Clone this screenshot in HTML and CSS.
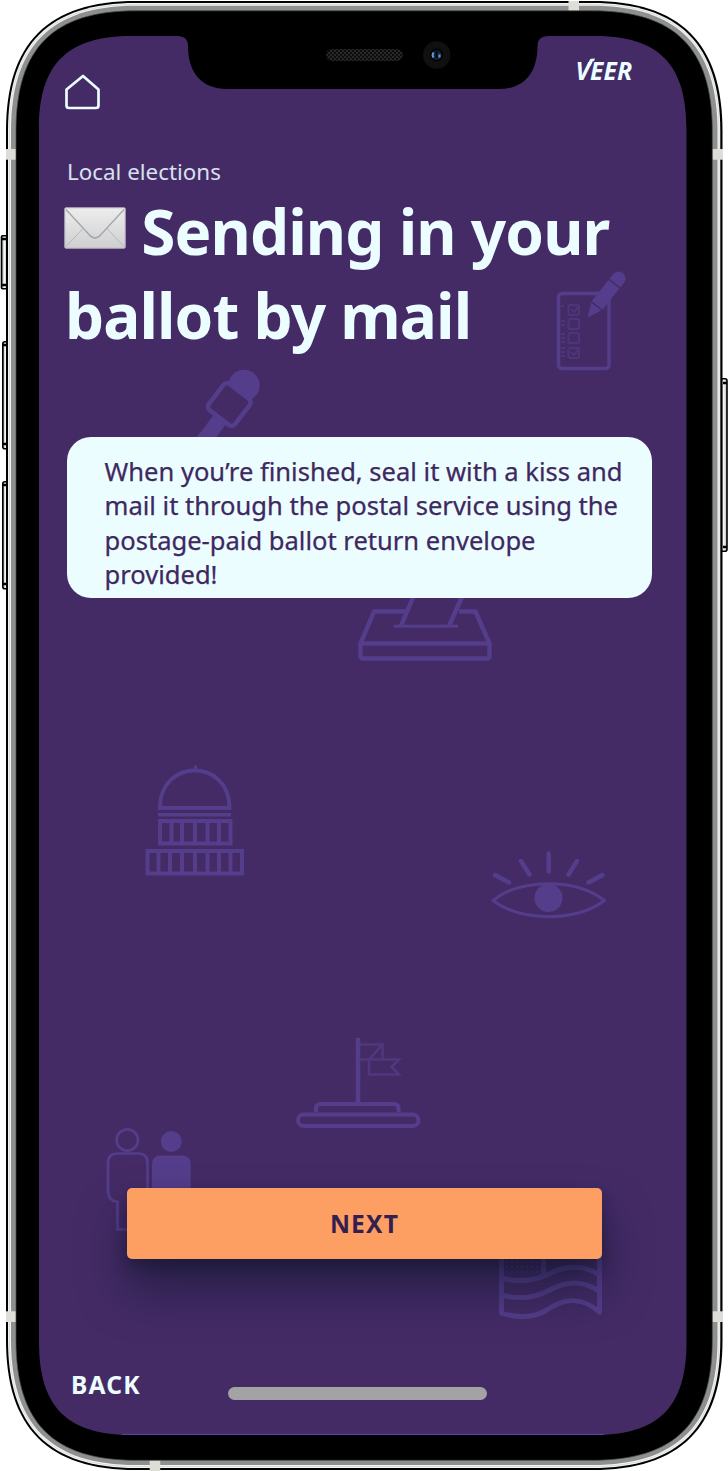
FILE: index.html
```html
<!DOCTYPE html>
<html lang="en">
<head>
<meta charset="utf-8">
<title>Veer – Sending in your ballot by mail</title>
<link rel="stylesheet" href="styles.css">
</head>
<body>
<div class="device">
  <svg class="shell" viewBox="0 0 728 1471" aria-hidden="true">
    <defs>
      <linearGradient id="key" x1="0" x2="1" y1="0" y2="0">
        <stop offset="0" stop-color="#777"/><stop offset=".45" stop-color="#fff"/><stop offset="1" stop-color="#aaa"/>
      </linearGradient>
      <pattern id="mesh" width="4" height="4" patternUnits="userSpaceOnUse">
        <rect width="4" height="4" fill="#0d0d0d"/>
        <path d="M0 0h2v2H0zM2 2h2v2H2z" fill="#272727"/>
      </pattern>
    </defs>
    <!-- side keys -->
    <g fill="url(#key)" stroke="#000" stroke-width="1.6">
      <rect x="1.5" y="235.800" width="6" height="53" rx="1"/>
      <rect x="2.800" y="341.800" width="5" height="107" rx="2"/>
      <rect x="2.800" y="481.800" width="5" height="107" rx="2"/>
      <rect x="721" y="378.800" width="6" height="172.500" rx="2"/>
    </g>
    <g stroke="#000" stroke-width="2.500">
      <path d="M2 239h4M2 285h4M3 345h4M3 444h4M3 485h4M3 584h4M723 383h4M723 547h4"/>
    </g>
    <!-- metal band -->
    <path d="M6 131C6 43 48 1 136 1H592C680 1 722.500 43 722.500 131V1340C722.500 1428 680 1470 592 1470H136C48 1470 6 1428 6 1340Z" fill="#000"/>
    <path d="M8 131C8 44 49 3 136 3H592C679 3 720.300 44 720.300 131V1340C720.300 1427 679 1468 592 1468H136C49 1468 8 1427 8 1340Z" fill="#f1f3ef"/>
    <path d="M9.500 131C9.500 45 50 4.500 136 4.500H592C678 4.500 719 45 719 131V1340C719 1426 678 1466.500 592 1466.500H136C50 1466.500 9.500 1426 9.500 1340Z" fill="none" stroke="#c5c8c4" stroke-width=".5"/>
    <path d="M11 131C11 46 51 5.800 136 5.800H592C677 5.800 717.500 46 717.500 131V1340C717.500 1425 677 1465 592 1465H136C51 1465 11 1425 11 1340Z" fill="#8e908f"/>
    <g fill="#dcded7">
      <rect x="568.500" y="1" width="10.500" height="10"/>
      <rect x="149.700" y="1460" width="10.500" height="11"/>
      <rect x="6" y="149" width="10.500" height="10.700"/>
      <rect x="6" y="1311.300" width="10.500" height="10.700"/>
      <rect x="712" y="149" width="11" height="10.700"/>
      <rect x="712" y="1311.300" width="11" height="10.700"/>
    </g>
    <path d="M16 131C16 48 53 10.800 136 10.800H592C675 10.800 712.300 48 712.300 131V1340C712.300 1423 675 1460.300 592 1460.300H136C53 1460.300 16 1423 16 1340Z" fill="#000" stroke="#484a49" stroke-width=".7"/>
    <!-- display with notch -->
    <path d="M39 129C39 64 67 36 132 36H178Q188 36 188 46C188 73 202 89 227 89H499C524 89 537.500 73 537.500 46Q537.500 36 548 36H594C659 36 686.500 64 686.500 129V1342C686.500 1407 659 1435 594 1435H132C67 1435 39 1407 39 1342Z" fill="#442b66"/>
    <path d="M122 1434.400H604" stroke="#5d44ad"/>
    <!-- speaker and camera -->
    <rect x="326" y="49" width="77" height="12" rx="6" fill="url(#mesh)"/>
    <circle cx="436.700" cy="55" r="13.700" fill="#101010"/>
    <circle cx="436.700" cy="55" r="6.500" fill="#020204"/>
    <circle cx="436.700" cy="55" r="4.800" fill="#18243a"/>
    <path d="M433.500 52.500q-1.800 2.500 0 5M439.500 54.500v3" stroke="#5c9be0" stroke-width="2" fill="none"/>
    <path d="M436.500 51v7" stroke="#05060a" stroke-width="2"/>
  </svg>

  <svg class="doodles" viewBox="0 0 728 1471" aria-hidden="true">
    <!-- ballot sheet and pencil -->
    <g fill="none" stroke="#543d8a" stroke-width="3.500" stroke-linejoin="round">
      <rect x="558.500" y="293.500" width="50.500" height="75" rx="3.500"/>
      <g stroke-width="2" stroke="#4c3579">
        <rect x="568.500" y="305" width="10.500" height="10" rx="1.500"/>
        <rect x="568.500" y="319" width="10.500" height="10" rx="1.500"/>
        <rect x="568.500" y="333" width="10.500" height="10" rx="1.500"/>
        <rect x="568.500" y="348" width="10.500" height="10" rx="1.500"/>
        <path d="M571 309l3 3 5-6M571 352l3 3 5-6"/>
        <path d="M561 306h3M561 321h4M561 325h4M561 334h4M561 338h4M561 342h4M561 348h4M561 352h4M561 356h4"/>
      </g>
    </g>
    <g transform="translate(587.500 317.500) rotate(38.500)" fill="#543d8a">
      <path d="M0 0L-6.500-14H6.500Z"/>
      <path d="M-7-15.500V-42.500H7V-15.500Z"/>
      <path d="M-7-44V-50Q-6.500-56 0-57Q6.500-56 7-50V-44Z"/>
    </g>
    <!-- microphone -->
    <g>
      <circle cx="244" cy="385.500" r="15.700" fill="#543d8a"/>
      <path d="M213 416l13 8-22 30-14-8Z" fill="#543d8a"/>
      <rect x="-16.500" y="-16.500" width="33" height="33" rx="4.500" transform="translate(229.300 404.500) rotate(37.500)" fill="#442b66" stroke="#543d8a" stroke-width="4.500"/>
    </g>
    <!-- ballot box -->
    <g fill="none" stroke="#543d8a" stroke-width="4.500" stroke-linejoin="round">
      <path d="M405 611.500H374L360.500 643.500V655.500Q360.500 658.500 363.500 658.500H486.500Q489.500 658.500 489.500 655.500V643.500L475.500 611.500H459M361 643.500H489"/>
      <path d="M416 590L401 626M465 590L449 626" />
      <path d="M394 626.300H458" stroke-width="3"/>
    </g>
    <!-- capitol -->
    <g fill="none" stroke="#543d8a" stroke-width="4">
      <path d="M159.800 808C160 758 229.500 758 229.500 808Z"/>
      <path d="M195.500 765.500v6" stroke-width="3"/>
      <path d="M158 814.800H231" stroke-width="3.500"/>
      <path d="M160 821H230.500V843.500H160ZM171.500 821V843M182 821V843M195 821V843M207.500 821V843M219 821V843"/>
      <path d="M147.500 851H242V873.500H147.500ZM158.500 851V873M170 851V873M182 851V873M195 851V873M207.500 851V873M219 851V873M230.500 851V873"/>
    </g>
    <!-- eye -->
    <g fill="none" stroke="#543d8a" stroke-width="3" stroke-linejoin="round" stroke-linecap="round">
      <path d="M493 900.500C521 878 576 878 604.500 900.500C576 922 521 922 493 900.500Z"/>
      <circle cx="548.500" cy="898" r="14" fill="#543d8a" stroke="none"/>
      <path stroke-width="4.500" d="M548.700 853.500V871.500M521 861L529.500 874.500M577 861L568.500 874.500M495 875L509 882.500M602.500 875L588.500 882.500"/>
    </g>
    <!-- flag on podium -->
    <g fill="none" stroke="#543d8a" stroke-width="4">
      <path d="M358 1038V1102" stroke-width="4.500"/>
      <path d="M316 1112V1108.500Q316 1104 320.500 1104H394Q398.500 1104 398.500 1108.500V1112"/>
      <rect x="298" y="1114.500" width="120.500" height="11.500" rx="5.750"/>
      <path stroke-width="2.500" stroke="#4f387e" d="M359 1044.500H382.500V1059.500M359 1059.500H399L391.500 1067L399 1074.500H369V1059.500L382 1045"/>
    </g>
    <!-- people -->
    <g fill="none" stroke="#543d8a" stroke-width="2.700">
      <circle cx="127.300" cy="1140" r="10.700"/>
      <path d="M117.500 1230V1202C111 1201 108 1197 108 1191V1163Q108 1153.500 117.500 1153.500H138Q147.500 1153.500 147.500 1163V1202M116 1229.500H132"/>
      <circle cx="171.300" cy="1141.500" r="10.500" fill="#543d8a" stroke="none"/>
      <path d="M152 1200V1164Q152 1155.500 161 1155.500H182Q190.700 1155.500 190.700 1164V1200Z" fill="#543d8a" stroke="none"/>
    </g>
    <!-- waving flag -->
    <g fill="none" stroke="#543d8a" stroke-width="5" stroke-linejoin="round">
      <path d="M501.500 1250V1313C516 1318 533 1318 545 1311C566 1297 582 1297 599.500 1312V1250M501.500 1295C520 1300 535 1298 550 1290C568 1280 583 1281 599.500 1291M501.500 1278C520 1283 537 1280 551 1273C568 1265 584 1265 599.500 1275M543.500 1250V1275"/>
      <path d="M506 1262h34M506 1267h34M506 1272h34" stroke-width="2" stroke-dasharray="2 3" opacity=".6"/>
    </g>
  </svg>

  <main class="screen">
    <header class="topbar">
      <svg class="home" viewBox="0 0 38 38" role="img" aria-label="Home"><path d="M18 3L33.500 16.500V32.500Q33.500 35 31 35H4Q1.500 35 1.500 32.500V16.500Z" fill="none" stroke="#ebfdff" stroke-width="2.700" stroke-linejoin="round"/></svg>
      <div class="brand">VEER<svg class="flick" viewBox="0 0 8 8" aria-hidden="true"><path d="M0 8L2.800 1.800Q3.300 .9 4.500 .8L8 .4L7 3.300H5.700L3.600 8Z" fill="#ebfdff"/></svg></div>
    </header>
    <p class="eyebrow">Local elections</p>
    <h1 class="title"><svg class="envelope" viewBox="0 0 62 42" aria-hidden="true">
      <defs><linearGradient id="paper" x1="0" x2="0" y1="0" y2="1"><stop offset="0" stop-color="#ededed"/><stop offset="1" stop-color="#cfcfcf"/></linearGradient></defs>
      <rect x=".8" y=".8" width="60.400" height="40.400" rx="1" fill="url(#paper)" stroke="#b9b2bf"/>
      <path d="M2 39.500L19 21.500M60 39.500L43 21.500" stroke="#b5b8ba" stroke-width="1" fill="none"/>
      <path d="M2 2.500L25 27.500Q31 34.500 37 27.500L60 2.500" stroke="#a0a7ad" stroke-width="1.300" fill="none"/>
    </svg><span class="line">Sending in your</span><br><span class="line">ballot by mail</span></h1>
    <section class="card">When you’re finished, seal it with a kiss and<br>mail it through the postal service using the<br>postage-paid ballot return envelope<br>provided!</section>
    <button class="next" type="button">NEXT</button>
    <footer class="bottom">
      <a class="back">BACK</a>
      <span class="indicator"></span>
    </footer>
  </main>
</div>
</body>
</html>
```

FILE: styles.css
```css
* { box-sizing: border-box; }
body { margin: 0; background: #fff; font-family: "Noto Sans", sans-serif; }
.device { position: relative; width: 728px; height: 1471px; overflow: hidden; }
.shell, .doodles { position: absolute; left: 0; top: 0; width: 728px; height: 1471px; }
.screen {
  position: relative;
  display: flex;
  flex-direction: column;
  height: 1471px;
  padding: 54px 76px 0 67px;
  color: #ebfdff;
}
.topbar { display: flex; justify-content: space-between; align-items: flex-start; height: 103px; }
.home { width: 38px; height: 38px; margin: 19px 0 0 -2px; }
.brand { position: relative; margin-right: 19.5px; font-size: 24.5px; line-height: 33px; font-weight: 700; font-style: italic; letter-spacing: .2px; }
.flick { position: absolute; left: 11.500px; top: 4px; width: 8px; height: 8px; }
.eyebrow { margin: 0; height: 30px; font-size: 22.4px; line-height: 30px; color: #d8e0ee; white-space: nowrap; }
.title { margin: 2px 0 0 -2px; height: 248px; font-size: 62px; line-height: 84px; font-weight: 700; letter-spacing: -.92px; white-space: nowrap; }
.envelope { width: 62px; height: 42px; margin: 0 15px 0 -.8px; vertical-align: 6px; }
.card { height: 161px; padding: 17px 0 0 37.5px; border-radius: 24px; background: #ebfdff; color: #3f2860; font-size: 25.550px; line-height: 34.4px; font-weight: 400; white-space: nowrap; -webkit-text-stroke: .25px #3f2860; }
.next {
  width: 475px; height: 71px; margin: 590px 0 0 60px; padding: 0;
  border: 0; border-radius: 5px; background: #fd9f63; color: #33204f;
  font: 700 24.6px/71px "Noto Sans", sans-serif; letter-spacing: 1.2px;
  box-shadow: 0 30px 46px rgba(8, 17, 38, .5), 0 8px 14px rgba(8, 17, 38, .35);
}
.bottom { display: flex; align-items: flex-start; margin-top: 109px; }
.back { width: 161px; padding-left: 4px; font-size: 24.6px; line-height: 33px; font-weight: 700; letter-spacing: 1.2px; }
.indicator { width: 259px; height: 13px; margin-top: 19px; border-radius: 7px; background: #a3a3a3; }
```
